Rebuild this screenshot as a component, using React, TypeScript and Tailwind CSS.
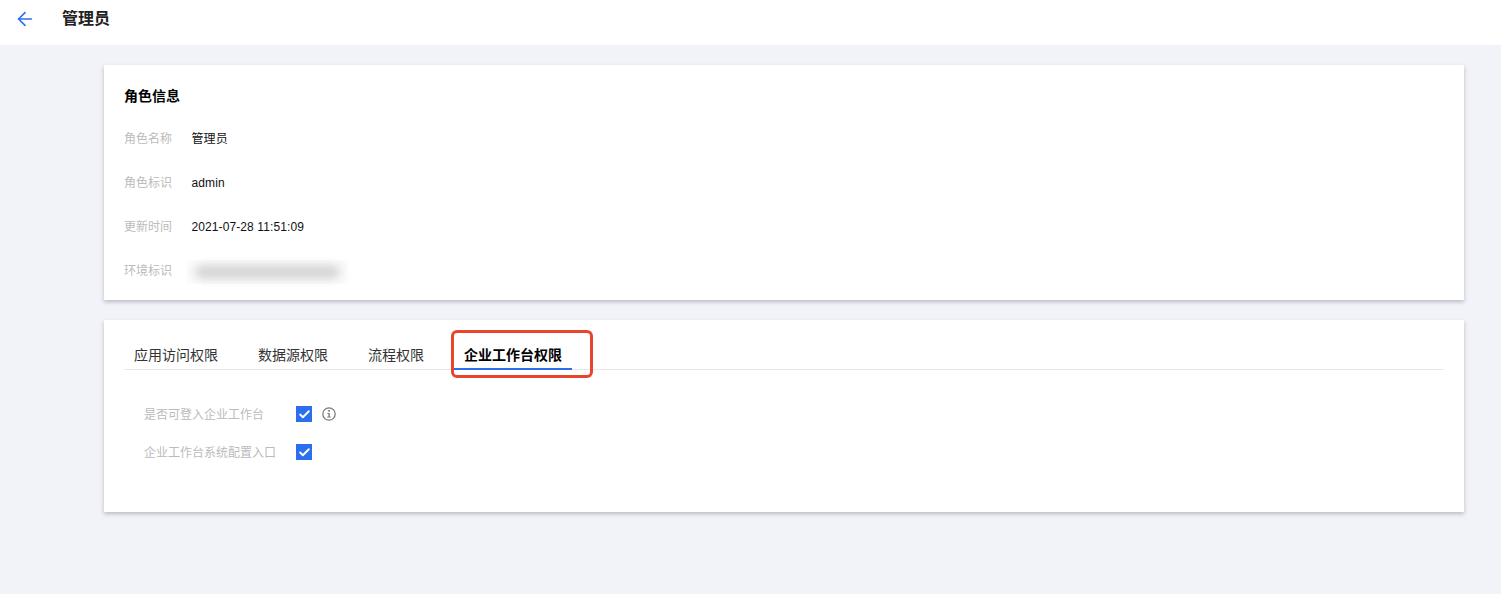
import { ArrowLeft, Check } from "lucide-react";

const fontStack = { fontFamily: '"Liberation Sans", "Noto Sans CJK SC", sans-serif' };

const infoRows = [
  { label: "角色名称", value: "管理员" },
  { label: "角色标识", value: "admin" },
  { label: "更新时间", value: "2021-07-28 11:51:09" },
];

const tabs = ["应用访问权限", "数据源权限", "流程权限", "企业工作台权限"];

function CheckedBox() {
  return (
    <span className="flex h-4 w-4 items-center justify-center bg-[#2b6ff0]">
      <Check className="h-[13px] w-[13px] text-white" strokeWidth={3.5} />
    </span>
  );
}

function InfoIcon() {
  return (
    <svg className="ml-[10px] h-[14px] w-[14px]" viewBox="0 0 14 14" fill="none">
      <circle cx="7" cy="7" r="6.2" stroke="#7d7d7d" strokeWidth="1.3" />
      <rect x="6.2" y="3" width="1.7" height="1.7" fill="#7d7d7d" />
      <path d="M5.4 6h2.4v3.6h1v1H5.3v-1h1.1V7H5.4z" fill="#7d7d7d" />
    </svg>
  );
}

export default function App() {
  return (
    <div className="min-h-[594px] bg-[#f2f3f8] text-[12px] text-black" style={fontStack}>
      <header className="flex h-[45px] items-center bg-white pb-[7px]">
        <ArrowLeft className="ml-[14px] h-[22px] w-[22px] text-[#2b6ff0]" strokeWidth={1.8} />
        <h1 className="ml-[26px] text-[16px] font-semibold text-[#222]">管理员</h1>
      </header>

      <main className="ml-[104px] mr-[37px] flex flex-col gap-5 pt-5">
        <section className="h-[235px] bg-white px-5 pt-[21px] shadow-[0_2px_4px_rgba(54,58,80,0.3)]">
          <h2 className="h-5 text-[14px] leading-5 font-semibold">角色信息</h2>
          <div className="mt-[11px] flex flex-col">
            {infoRows.map((row) => (
              <div key={row.label} className="flex h-[44px] items-center">
                <span className="w-[67.5px] text-[#bbbbbb]">{row.label}</span>
                <span className="tracking-[0.1px] text-[#111]">{row.value}</span>
              </div>
            ))}
            <div className="flex h-[44px] items-center">
              <span className="w-[63px] text-[#bbbbbb]">环境标识</span>
              <span className="mt-[1px] h-6 w-[161px] bg-[#fbfbfb] px-2 py-[5px]">
                <span className="block h-[14px] rounded-full bg-[#d6d6d6] blur-[4px]" />
              </span>
            </div>
          </div>
        </section>

        <section className="relative h-[192px] bg-white px-5 pt-[15px] shadow-[0_2px_4px_rgba(54,58,80,0.3)]">
          <nav className="flex h-[35px] gap-5 border-b border-[#e8e8e8]">
            {tabs.map((tab, index) => {
              const active = index === tabs.length - 1;
              return (
                <span
                  key={tab}
                  className={
                    active
                      ? "h-[35px] border-b-2 border-[#2b6ff0] px-[10px] pt-[10px] text-[14px] leading-[20px] font-semibold text-black"
                      : "h-[35px] px-[10px] pt-[10px] text-[14px] leading-[20px] text-[#333]"
                  }
                >
                  {tab}
                </span>
              );
            })}
          </nav>

          <div className="mt-[36px] flex flex-col gap-[22px] pl-5">
            <div className="flex h-4 items-center">
              <span className="mt-[2px] w-[152px] text-[#bbbbbb]">是否可登入企业工作台</span>
              <CheckedBox />
              <InfoIcon />
            </div>
            <div className="flex h-4 items-center">
              <span className="mt-[2px] w-[152px] text-[#bbbbbb]">企业工作台系统配置入口</span>
              <CheckedBox />
            </div>
          </div>

          {/* red annotation drawn over the active tab */}
          <div className="absolute left-[347px] top-[10px] h-[48px] w-[142px] rounded-[6px] border-[3px] border-[#e9452c]" />
        </section>
      </main>
    </div>
  );
}
